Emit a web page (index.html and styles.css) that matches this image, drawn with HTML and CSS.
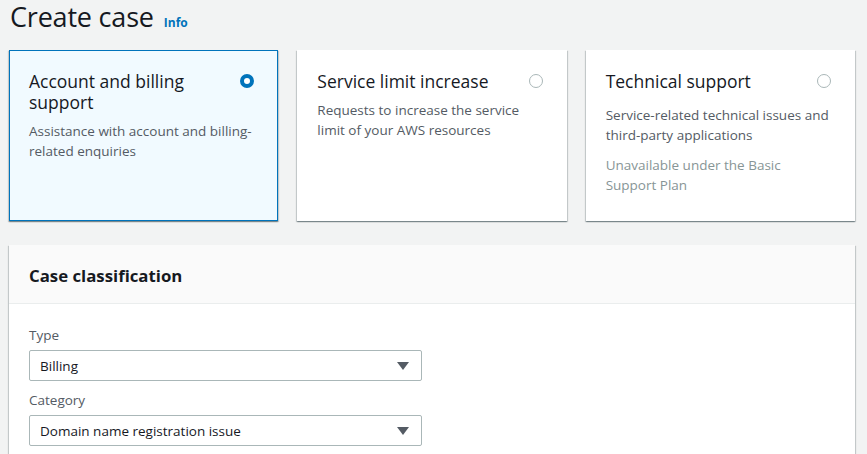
FILE: index.html
```html
<!DOCTYPE html>
<html>
<head>
<meta charset="utf-8">
<link rel="stylesheet" href="styles.css">
</head>
<body>
<div class="page">
  <div class="page-head">
    <h1 class="title">Create case</h1>
    <a class="info">Info</a>
  </div>
  <div class="tiles">
    <div class="tile tile-selected">
      <div class="tile-top">
        <div class="tile-title">Account and billing support</div>
        <span class="radio radio-on"></span>
      </div>
      <div class="tile-desc">Assistance with account and billing-related enquiries</div>
    </div>
    <div class="tile">
      <div class="tile-top">
        <div class="tile-title">Service limit increase</div>
        <span class="radio"></span>
      </div>
      <div class="tile-desc">Requests to increase the service limit of your AWS resources</div>
    </div>
    <div class="tile">
      <div class="tile-top">
        <div class="tile-title">Technical support</div>
        <span class="radio"></span>
      </div>
      <div class="tile-desc tile-desc-spaced">Service-related technical issues and third-party applications</div>
      <div class="tile-note">Unavailable under the Basic Support Plan</div>
    </div>
  </div>
  <div class="panel">
    <div class="panel-head">Case classification</div>
    <div class="panel-body">
      <div class="field">
        <div class="label">Type</div>
        <div class="select"><span>Billing</span><span class="caret"></span></div>
      </div>
      <div class="field">
        <div class="label">Category</div>
        <div class="select"><span>Domain name registration issue</span><span class="caret"></span></div>
      </div>
    </div>
  </div>
</div>
</body>
</html>
```
FILE: styles.css
```css
* { box-sizing: border-box; }
html, body { margin: 0; padding: 0; }
body {
  background: #f2f3f3;
  font-family: "Open Sans", "Noto Sans", sans-serif;
  color: #16191f;
  width: 867px;
  height: 454px;
  overflow: hidden;
}
.page { padding: 0 12px 0 9px; }
.page-head {
  display: flex;
  align-items: baseline;
  gap: 10px;
  height: 31px;
  padding-top: 3px;
  padding-left: 1px;
}
.title {
  margin: 0;
  font-size: 27px;
  font-weight: 400;
  line-height: 28px;
  letter-spacing: -0.2px;
}
.info {
  font-size: 12px;
  font-weight: 700;
  color: #0073bb;
}
.tiles {
  margin-top: 19px;
  display: grid;
  grid-template-columns: 1fr 1fr 1fr;
  gap: 19px;
}
.tile {
  background: #fff;
  height: 171px;
  padding: 21px 20px 0 20px;
  box-shadow: 0 1px 1px 0 rgba(0,28,36,.3), 1px 1px 1px 0 rgba(0,28,36,.15), -1px 1px 1px 0 rgba(0,28,36,.15);
}
.tile-selected {
  background: #f1faff;
  border: 1px solid #0073bb;
  padding: 20px 19px 0 19px;
}
.tile-top {
  display: flex;
  justify-content: space-between;
  align-items: flex-start;
}
.tile-title {
  font-size: 17.5px;
  line-height: 21px;
  max-width: 180px;
}
.radio {
  width: 14px;
  height: 14px;
  border-radius: 50%;
  border: 1px solid #aab7b8;
  margin-top: 3px;
  margin-right: 4px;
  flex-shrink: 0;
  background: #fff;
}
.radio-on {
  border: 4px solid #0073bb;
}
.tile-desc {
  margin-top: 8px;
  font-size: 13.5px;
  line-height: 20px;
  color: #545b64;
}
.tile-desc-spaced { margin-top: 13px; }
.tile-note {
  margin-top: 10px;
  font-size: 13.5px;
  line-height: 20px;
  color: #879596;
  max-width: 180px;
}
.panel {
  margin-top: 24px;
  background: #fff;
  box-shadow: 0 1px 1px 0 rgba(0,28,36,.3), 1px 1px 1px 0 rgba(0,28,36,.15), -1px 1px 1px 0 rgba(0,28,36,.15);
}
.panel-head {
  background: #fafafa;
  border-bottom: 1px solid #eaeded;
  height: 59px;
  padding: 20px 20px 0 20px;
  font-size: 16.8px;
  font-weight: 700;
  line-height: 22px;
}
.panel-body {
  padding: 21px 20px 20px 20px;
  display: flex;
  flex-direction: column;
  gap: 9px;
}
.label {
  font-size: 13.5px;
  line-height: 20px;
  color: #545b64;
  margin-bottom: 5px;
}
.select {
  width: 393px;
  height: 31px;
  border: 1px solid #aab7b8;
  border-radius: 2px;
  background: #fff;
  display: flex;
  align-items: center;
  justify-content: space-between;
  padding: 0 12px 0 10px;
  font-size: 13.5px;
  color: #16191f;
}
.caret {
  width: 0;
  height: 0;
  border-left: 6px solid transparent;
  border-right: 6px solid transparent;
  border-top: 8px solid #545b64;
}
```
